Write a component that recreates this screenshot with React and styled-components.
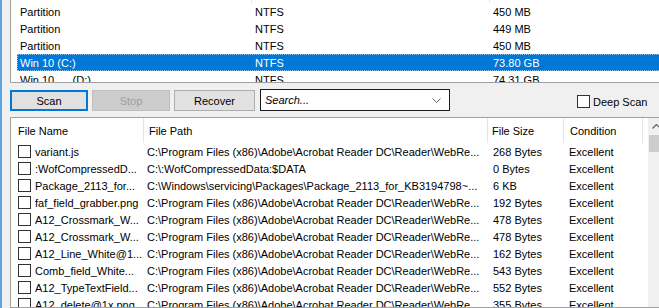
import React from "react";
import styled, { createGlobalStyle } from "styled-components";

const GlobalStyle = createGlobalStyle`
  body {
    margin: 0;
    font-family: "Liberation Sans", Arial, sans-serif;
    font-size: 11px;
    color: #000;
  }
`;

const Window = styled.div`
  width: 659px;
  height: 308px;
  box-sizing: border-box;
  overflow: hidden;
  background: #f0f0f0;
  border-left: 2px solid #5ca5e3;
  padding-left: 8px;
  display: flex;
  flex-direction: column;
`;

const DriveList = styled.div`
  height: 83px;
  flex-shrink: 0;
  box-sizing: border-box;
  margin-right: -8px;
  background: #fff;
  border: 1px solid #a0a0a0;
  border-top: none;
  border-right: none;
  overflow: hidden;
`;

const DriveHeader = styled.div`
  display: flex;
  height: 3px;
`;

const HeaderStub = styled.div`
  width: ${(p) => p.$w}px;
  flex-shrink: 0;
  border-right: 1px solid #e5e5e5;
`;

const DriveRow = styled.div`
  display: flex;
  align-items: center;
  height: 17px;
  margin-left: 6px;
  box-sizing: border-box;
  white-space: pre;
  background: ${(p) => (p.$selected ? "#0078d7" : "transparent")};
  color: ${(p) => (p.$selected ? "#fff" : "#000")};
  outline: ${(p) => (p.$selected ? "1px dotted rgba(255,255,255,0.55)" : "none")};
  outline-offset: -1px;
`;

const DriveCell = styled.div`
  width: ${(p) => (p.$w ? `${p.$w}px` : "auto")};
  flex: ${(p) => (p.$w ? "none" : "1")};
  padding-left: ${(p) => p.$pad}px;
  box-sizing: border-box;
  overflow: hidden;
`;

const Toolbar = styled.div`
  height: 34px;
  flex-shrink: 0;
  display: flex;
  align-items: flex-start;
  padding-top: 7px;
  box-sizing: border-box;
  gap: 4px;
`;

const Button = styled.button`
  width: ${(p) => p.$w}px;
  height: 21px;
  flex-shrink: 0;
  box-sizing: border-box;
  padding: 0;
  margin: 0;
  font-family: inherit;
  font-size: 11px;
  background: ${(p) => (p.disabled ? "#cccccc" : "#e1e1e1")};
  color: ${(p) => (p.disabled ? "#a0a0a0" : "#000")};
  border: ${(p) =>
    p.$focused ? "2px solid #0078d7" : p.disabled ? "1px solid #bfbfbf" : "1px solid #adadad"};
  border-radius: 0;
`;

const SearchBox = styled.div`
  width: 190px;
  height: 22px;
  flex-shrink: 0;
  margin-top: -1px;
  margin-left: 1px;
  box-sizing: border-box;
  background: #fff;
  border: 1px solid #1a1a1a;
  display: flex;
  align-items: center;
  padding: 0 8px 0 4px;
  font-style: italic;
`;

const SearchText = styled.span`
  flex: 1;
`;

const CheckLabel = styled.label`
  display: flex;
  flex-shrink: 0;
  align-items: center;
  gap: 3px;
  margin-top: 5px;
  margin-left: ${(p) => p.$ml}px;
  white-space: nowrap;
`;

const Box = styled.span`
  display: inline-block;
  width: 13px;
  height: 13px;
  box-sizing: border-box;
  flex-shrink: 0;
  background: #fff;
  border: 1px solid ${(p) => p.$color || "#333"};
`;

const FileList = styled.div`
  flex: 1;
  min-height: 0;
  margin-right: -7px;
  box-sizing: border-box;
  background: #fff;
  border: 1px solid #a0a0a0;
  display: flex;
  overflow: hidden;
`;

const Table = styled.div`
  flex: 1;
  display: flex;
  flex-direction: column;
`;

const HeaderRow = styled.div`
  display: flex;
  height: 25px;
  flex-shrink: 0;
`;

const HeaderCell = styled.div`
  width: ${(p) => (p.$w ? `${p.$w}px` : "auto")};
  flex: ${(p) => (p.$w ? "none" : "1")};
  box-sizing: border-box;
  padding-left: ${(p) => p.$pad}px;
  display: flex;
  align-items: center;
  border-right: ${(p) => (p.$w ? "1px solid #e5e5e5" : "none")};
`;

const FileRow = styled.div`
  display: flex;
  align-items: center;
  height: 17px;
  flex-shrink: 0;
  white-space: nowrap;
`;

const FileCell = styled.div`
  width: ${(p) => p.$w}px;
  flex-shrink: 0;
  box-sizing: border-box;
  padding-left: ${(p) => p.$pad}px;
  overflow: hidden;
  display: flex;
  align-items: center;
  gap: 4px;
`;

const Scrollbar = styled.div`
  width: 17px;
  flex-shrink: 0;
  background: #f0f0f0;
  display: flex;
  flex-direction: column;
`;

const ScrollArrow = styled.div`
  height: 17px;
  display: flex;
  align-items: center;
  justify-content: center;
`;

const Thumb = styled.div`
  height: 17px;
  margin: 0 1px;
  background: #cdcdcd;
`;

const drives = [
  { name: "Partition", fs: "NTFS", size: "450 MB" },
  { name: "Partition", fs: "NTFS", size: "449 MB" },
  { name: "Partition", fs: "NTFS", size: "450 MB" },
  { name: "Win 10 (C:)", fs: "NTFS", size: "73.80 GB", selected: true },
  { name: "Win 10      (D:)", fs: "NTFS", size: "74.31 GB" },
];

const acro = "C:\\Program Files (x86)\\Adobe\\Acrobat Reader DC\\Reader\\WebRe...";

const files = [
  ["variant.js", acro, "268 Bytes"],
  [":WofCompressedD...", "C:\\:WofCompressedData:$DATA", "0 Bytes"],
  ["Package_2113_for...", "C:\\Windows\\servicing\\Packages\\Package_2113_for_KB3194798~...", "6 KB"],
  ["faf_field_grabber.png", acro, "192 Bytes"],
  ["A12_Crossmark_W...", acro, "478 Bytes"],
  ["A12_Crossmark_W...", acro, "478 Bytes"],
  ["A12_Line_White@1...", acro, "162 Bytes"],
  ["Comb_field_White...", acro, "543 Bytes"],
  ["A12_TypeTextField...", acro, "552 Bytes"],
  ["A12_delete@1x.png", acro, "355 Bytes"],
];

// widths match the header dividers at x 143, 487, 563, 642
const columns = [
  { title: "File Name", w: 133, hpad: 7, pad: 7 },
  { title: "File Path", w: 344, hpad: 5, pad: 3 },
  { title: "File Size", w: 76, hpad: 4, pad: 5 },
  { title: "Condition", w: 79, hpad: 6, pad: 5 },
];

const App = () => {
  return (
    <>
      <GlobalStyle />
      <Window>
        <DriveList>
          <DriveHeader>
            <HeaderStub $w={240} />
            <HeaderStub $w={237} />
          </DriveHeader>
          {drives.map((d, i) => (
            <DriveRow key={i} $selected={d.selected}>
              <DriveCell $w={233} $pad={3}>{d.name}</DriveCell>
              <DriveCell $w={237} $pad={5}>{d.fs}</DriveCell>
              <DriveCell $pad={6}>{d.size}</DriveCell>
            </DriveRow>
          ))}
        </DriveList>

        <Toolbar>
          <Button $w={78} $focused>Scan</Button>
          <Button $w={78} disabled>Stop</Button>
          <Button $w={81}>Recover</Button>
          <SearchBox>
            <SearchText>Search...</SearchText>
            <svg width="9" height="5" viewBox="0 0 9 5">
              <polyline points="0.5,0.5 4.5,4.5 8.5,0.5" fill="none" stroke="#606060" strokeWidth="1" />
            </svg>
          </SearchBox>
          <CheckLabel $ml={123}>
            <Box />
            Deep Scan
          </CheckLabel>
          <CheckLabel $ml={10}>
            <Box $color="#adadad" />
          </CheckLabel>
        </Toolbar>

        <FileList>
          <Table>
            <HeaderRow>
              {columns.map((c) => (
                <HeaderCell key={c.title} $w={c.w} $pad={c.hpad}>
                  {c.title}
                </HeaderCell>
              ))}
              <HeaderCell />
            </HeaderRow>
            {files.map((f, i) => (
              <FileRow key={i}>
                <FileCell $w={columns[0].w} $pad={columns[0].pad}>
                  <Box />
                  {f[0]}
                </FileCell>
                <FileCell $w={columns[1].w} $pad={columns[1].pad}>{f[1]}</FileCell>
                <FileCell $w={columns[2].w} $pad={columns[2].pad}>{f[2]}</FileCell>
                <FileCell $w={columns[3].w} $pad={columns[3].pad}>Excellent</FileCell>
              </FileRow>
            ))}
          </Table>
          <Scrollbar>
            <ScrollArrow>
              <svg width="9" height="5" viewBox="0 0 9 5">
                <polyline points="0.5,4.5 4.5,0.5 8.5,4.5" fill="none" stroke="#606060" strokeWidth="1.2" />
              </svg>
            </ScrollArrow>
            <Thumb />
          </Scrollbar>
        </FileList>
      </Window>
    </>
  );
};

export default App;
